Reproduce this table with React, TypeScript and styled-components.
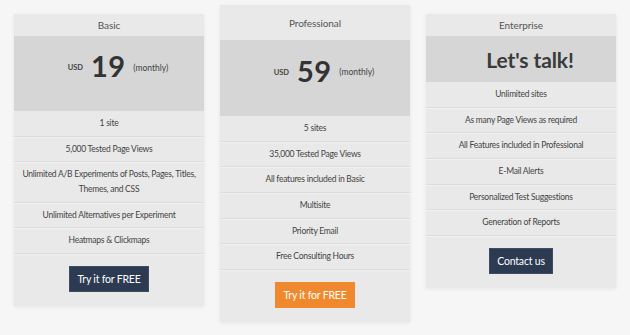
import React from "react";
import styled, { createGlobalStyle } from "styled-components";

const Global = createGlobalStyle`
  html, body { margin: 0; padding: 0; background: #f6f6f6; }
  body { font-family: "Lato", "Liberation Sans", sans-serif; color: #444; }
`;

const Page = styled.div`
  display: flex;
  align-items: flex-start;
  gap: 16px;
  padding: 5px 0 0 14px;
  width: 630px;
  height: 335px;
  box-sizing: border-box;
`;

const Card = styled.div<{ $featured?: boolean }>`
  width: 190px;
  margin-top: ${(p) => (p.$featured ? "0" : "9px")};
  background: #e9e9e9;
  box-shadow: 0 1px 4px rgba(0, 0, 0, 0.07);
  display: flex;
  flex-direction: column;
`;

const Header = styled.div<{ $featured?: boolean }>`
  height: ${(p) => (p.$featured ? "35px" : "22px")};
  display: flex;
  align-items: center;
  justify-content: center;
  font-size: 10px;
  letter-spacing: -0.1px;
  color: #555;
`;

const PriceBand = styled.div<{ $tall?: boolean; $featured?: boolean }>`
  height: ${(p) => (p.$tall ? (p.$featured ? "76px" : "75px") : "46px")};
  box-sizing: border-box;
  padding: ${(p) => (p.$tall ? "0 0 16px 18px" : "0 0 0 18px")};
  background: #d6d6d6;
  display: flex;
  align-items: center;
  justify-content: center;
  gap: 8px;
`;

const Currency = styled.span`
  font-size: 7.5px;
  font-weight: 700;
  color: #444;
  margin-top: 4px;
`;

const Amount = styled.span`
  font-size: 29px;
  font-weight: 700;
  color: #333;
  letter-spacing: 0.3px;
`;

const Period = styled.span`
  font-size: 8.5px;
  color: #444;
  margin-top: 4px;
`;

const Talk = styled.span`
  font-size: 21px;
  font-weight: 700;
  color: #3a3a3a;
  letter-spacing: -0.1px;
`;

const Feature = styled.div`
  padding: 5px 8px 5.2px;
  line-height: 14.5px;
  font-size: 8.5px;
  letter-spacing: -0.25px;
  text-align: center;
  color: #444;
  border-bottom: 1px solid #dcdcdc;
  box-shadow: 0 1px 0 #f1f1f1;
`;

const Footer = styled.div`
  display: flex;
  justify-content: center;
  padding: 12px 0 14px;
`;

const Button = styled.button<{ $variant: "dark" | "orange" }>`
  border: none;
  font-family: inherit;
  font-size: 10.5px;
  letter-spacing: -0.2px;
  color: #fff;
  height: 26px;
  padding: 0 8px;
  white-space: nowrap;
  background: ${(p) => (p.$variant === "orange" ? "#f0892e" : "#2c3a52")};
  ${(p) => (p.$variant === "dark" ? "box-shadow: inset 0 0 0 1px #3f4c63;" : "")}
`;

type Plan = {
  name: string;
  featured?: boolean;
  amount?: string;
  features: string[];
  cta: string;
  variant: "dark" | "orange";
};

const plans: Plan[] = [
  {
    name: "Basic",
    amount: "19",
    features: [
      "1 site",
      "5,000 Tested Page Views",
      "Unlimited A/B Experiments of Posts, Pages, Titles, Themes, and CSS",
      "Unlimited Alternatives per Experiment",
      "Heatmaps & Clickmaps",
    ],
    cta: "Try it for FREE",
    variant: "dark",
  },
  {
    name: "Professional",
    featured: true,
    amount: "59",
    features: [
      "5 sites",
      "35,000 Tested Page Views",
      "All features included in Basic",
      "Multisite",
      "Priority Email",
      "Free Consulting Hours",
    ],
    cta: "Try it for FREE",
    variant: "orange",
  },
  {
    name: "Enterprise",
    features: [
      "Unlimited sites",
      "As many Page Views as required",
      "All Features included in Professional",
      "E-Mail Alerts",
      "Personalized Test Suggestions",
      "Generation of Reports",
    ],
    cta: "Contact us",
    variant: "dark",
  },
];

export default function App() {
  return (
    <>
      <Global />
      <Page>
        {plans.map((p) => (
          <Card key={p.name} $featured={p.featured}>
            <Header $featured={p.featured}>{p.name}</Header>
            <PriceBand $tall={!!p.amount} $featured={p.featured}>
              {p.amount ? (
                <>
                  <Currency>USD</Currency>
                  <Amount>{p.amount}</Amount>
                  <Period>(monthly)</Period>
                </>
              ) : (
                <Talk>Let's talk!</Talk>
              )}
            </PriceBand>
            {p.features.map((f) => (
              <Feature key={f}>{f}</Feature>
            ))}
            <Footer>
              <Button $variant={p.variant}>{p.cta}</Button>
            </Footer>
          </Card>
        ))}
      </Page>
    </>
  );
}
